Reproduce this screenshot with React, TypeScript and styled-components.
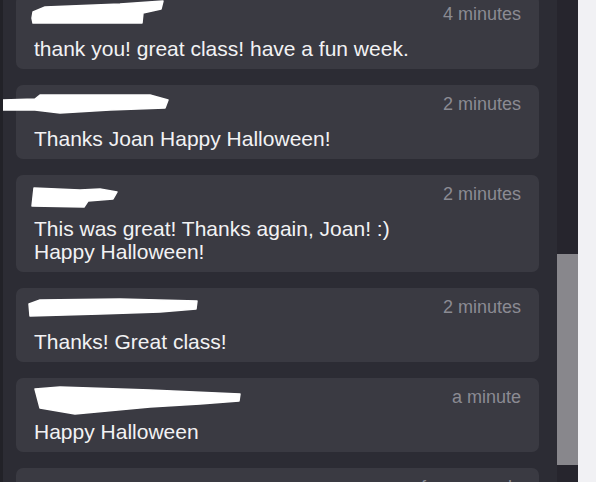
import React from "react";
import styled, { createGlobalStyle } from "styled-components";

const GlobalStyle = createGlobalStyle`
  html, body {
    margin: 0;
    padding: 0;
    background: #f1f1f4;
  }

  * {
    box-sizing: border-box;
  }
`;

const Page = styled.div`
  display: flex;
  width: 596px;
  height: 482px;
  overflow: hidden;
  font-family: "Liberation Sans", Arial, sans-serif;
`;

const Panel = styled.div`
  flex: 0 0 557px;
  background: #2c2c34;
  border-left: 3px solid #222228;
  padding: 0 18px 0 13px;
  overflow: hidden;
`;

const Feed = styled.div`
  display: flex;
  flex-direction: column;
  gap: 16px;
  margin-top: -5px;
`;

const Card = styled.div`
  background: #3a3a42;
  border-radius: 7px;
  padding: 8px 18px 9px;
`;

const Header = styled.div`
  display: flex;
  justify-content: space-between;
  align-items: flex-start;
  height: 21px;
`;

const Redaction = styled.svg`
  display: block;
  flex: none;
  overflow: visible;
`;

const Time = styled.div`
  font-size: 18px;
  line-height: 22px;
  color: #8b8b93;
  white-space: nowrap;
`;

const Body = styled.div`
  margin-top: 13px;
  font-size: 21px;
  line-height: 23px;
  color: #f2f2f4;
  white-space: pre-line;
`;

const Track = styled.div`
  flex: 0 0 21px;
  background: #26252d;
  padding-top: 254px;
`;

const Thumb = styled.div`
  height: 211px;
  background: #88878c;
`;

const Gutter = styled.div`
  flex: 1;
  background: #f1f1f4;
`;

interface Comment {
  scribble: string;
  time: string;
  text: string;
}

const comments: Comment[] = [
  {
    scribble: "-1,9 11,4 86,1 129,-2 127,6 109,10 108,20 -1,20 -2,15",
    time: "4 minutes",
    text: "thank you! great class! have a fun week.",
  },
  {
    scribble: "-34,7 1,6 6,2 116,2 134,7 131,15 76,17 26,20 1,17 -34,17",
    time: "2 minutes",
    text: "Thanks Joan Happy Halloween!",
  },
  {
    scribble: "0,5 46,7 66,6 83,9 79,16 54,18 50,24 -2,23",
    time: "2 minutes",
    text: "This was great! Thanks again, Joan! :)\nHappy Halloween!",
  },
  {
    scribble: "-5,8 6,4 86,3 163,5 162,13 126,16 66,18 -4,20",
    time: "2 minutes",
    text: "Thanks! Great class!",
  },
  {
    scribble: "1,3 26,1 116,4 206,8 205,15 166,18 116,21 41,28 6,22",
    time: "a minute",
    text: "Happy Halloween",
  },
  {
    scribble: "0,12 60,11 140,13 138,21 60,23 0,22",
    time: "a few seconds",
    text: "Thank you!",
  },
];

const CommentCard: React.FC<{ comment: Comment }> = ({ comment }) => (
  <Card>
    <Header>
      <Redaction width="210" height="21">
        <polygon
          points={comment.scribble}
          fill="#ffffff"
          stroke="#ffffff"
          strokeWidth="1.5"
          strokeLinejoin="round"
        />
      </Redaction>
      <Time>{comment.time}</Time>
    </Header>
    <Body>{comment.text}</Body>
  </Card>
);

export default function App() {
  return (
    <>
      <GlobalStyle />
      <Page>
        <Panel>
          <Feed>
            {comments.map((c, i) => (
              <CommentCard key={i} comment={c} />
            ))}
          </Feed>
        </Panel>
        <Track>
          <Thumb />
        </Track>
        <Gutter />
      </Page>
    </>
  );
}
